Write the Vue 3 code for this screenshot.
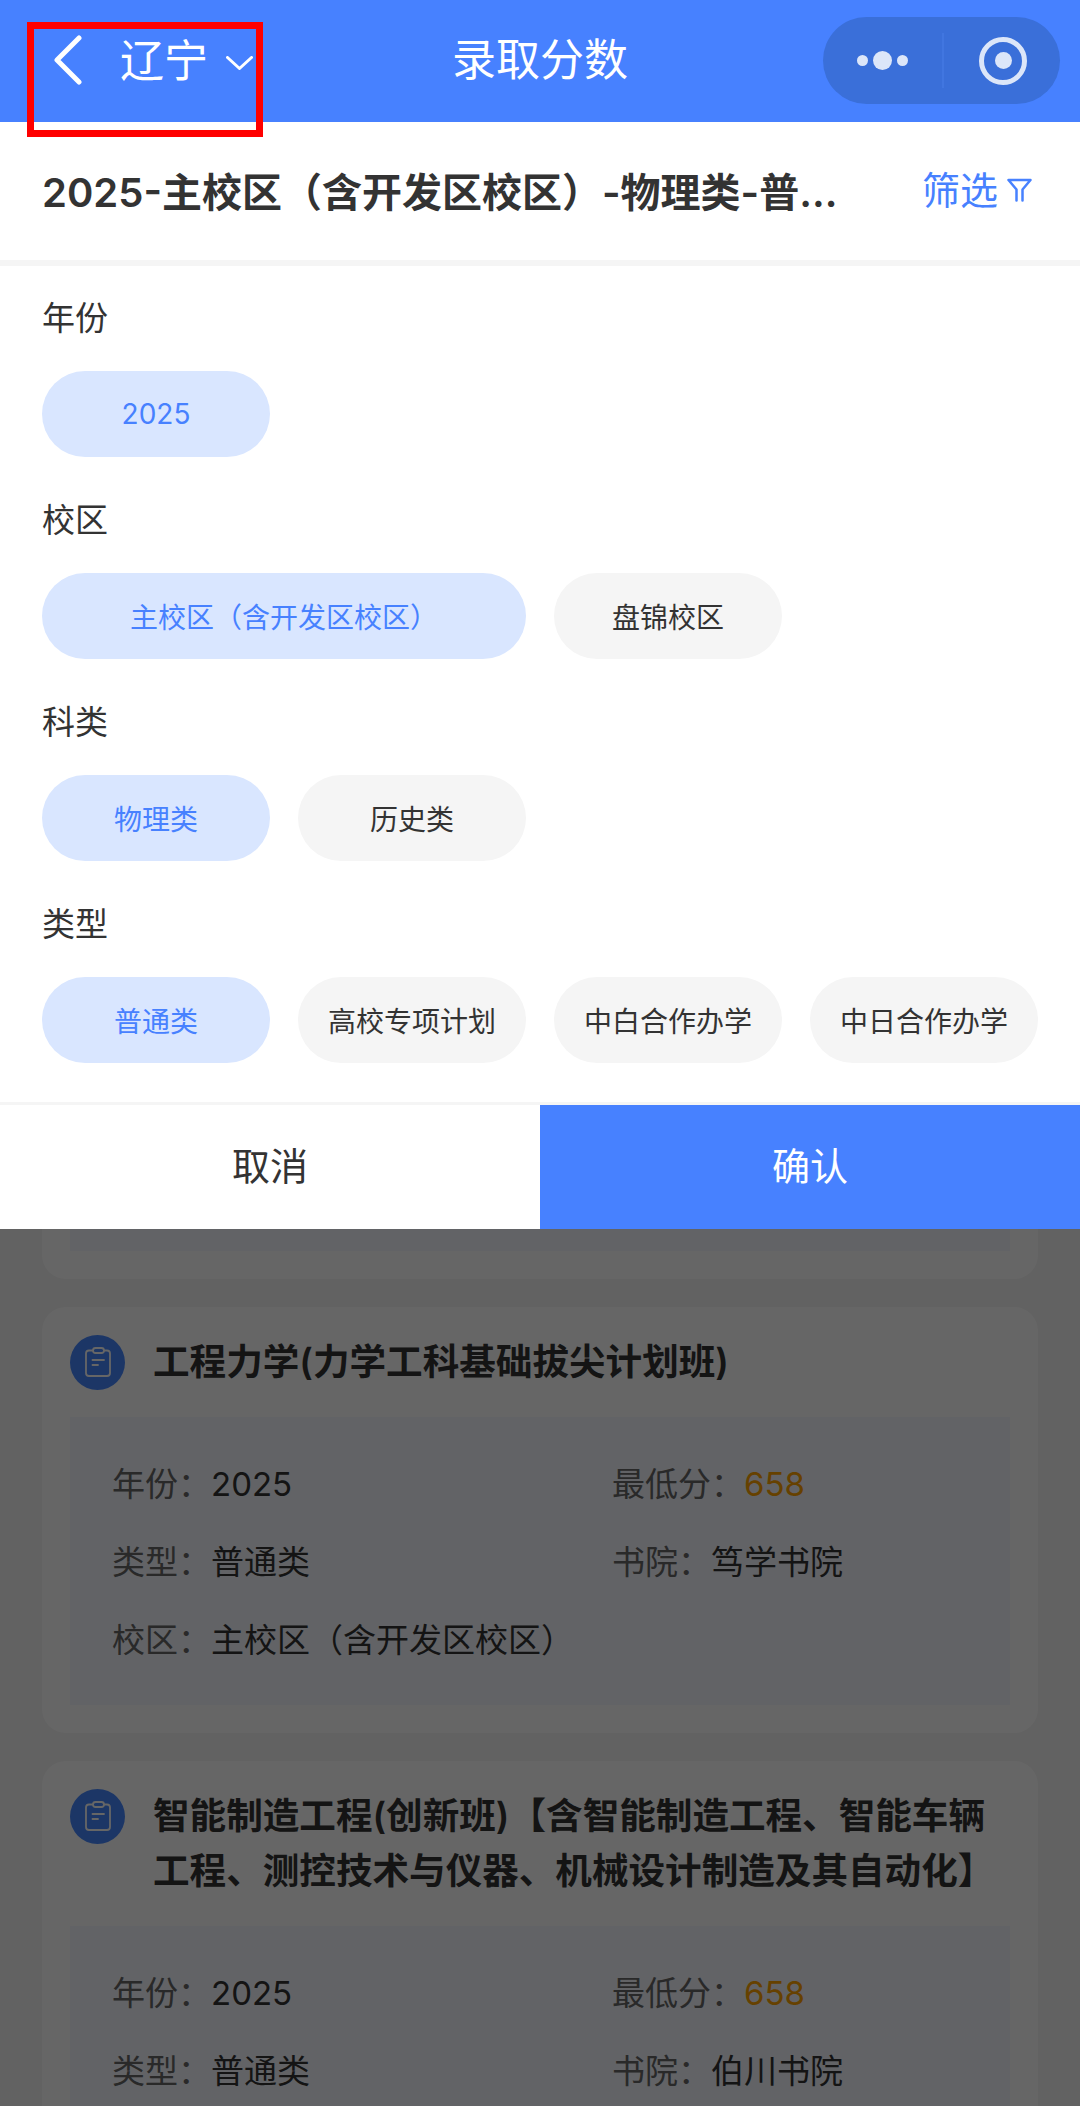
<script setup>
const groups = [
  { label: '年份', chips: [{ text: '2025', active: true }] },
  { label: '校区', chips: [{ text: '主校区（含开发区校区）', active: true, wide: true }, { text: '盘锦校区' }] },
  { label: '科类', chips: [{ text: '物理类', active: true }, { text: '历史类' }] },
  { label: '类型', chips: [{ text: '普通类', active: true }, { text: '高校专项计划' }, { text: '中白合作办学' }, { text: '中日合作办学' }] },
]
const cards = [
  {
    lines: ['工程力学(力学工科基础拔尖计划班)'],
    college: '笃学书院',
    campus: '主校区（含开发区校区）',
  },
  {
    lines: ['智能制造工程(创新班)【含智能制造工程、智能车辆', '工程、测控技术与仪器、机械设计制造及其自动化】'],
    college: '伯川书院',
  },
]
</script>

<template>
  <div class="page">
    <header class="nav">
      <div class="nav-left">
        <svg class="back" width="28" height="50" viewBox="0 0 28 50"><path d="M25 3 3 25l22 22" /></svg>
        <span class="province">辽宁</span>
        <svg class="caret" width="27" height="14" viewBox="0 0 27 14"><path d="M1.500 1.500 13.500 12.500l12-11" /></svg>
      </div>
      <div class="nav-title">录取分数</div>
      <div class="nav-right">
        <div class="capsule">
          <div class="dots"><i class="dot"></i><i class="dot big"></i><i class="dot"></i></div>
          <i class="capsule-line"></i>
          <div class="target"><i></i></div>
        </div>
      </div>
    </header>

    <section class="summary">
      <div class="summary-text">2025-主校区（含开发区校区）-物理类-普通类</div>
      <div class="filter">
        <span>筛选</span>
        <svg width="25" height="24" viewBox="0 0 25 24"><path d="M9.500 22.500V11.500L1.500 2h22l-8 9.500v11" /></svg>
      </div>
    </section>

    <section class="panel">
      <div class="groups">
        <div v-for="g in groups" :key="g.label" class="group">
          <div class="group-label">{{ g.label }}</div>
          <div class="chips">
            <div
              v-for="c in g.chips"
              :key="c.text"
              class="chip"
              :class="{ active: c.active, wide: c.wide }"
            >{{ c.text }}</div>
          </div>
        </div>
      </div>
      <div class="actions">
        <div class="btn cancel">取消</div>
        <div class="btn confirm">确认</div>
      </div>
    </section>

    <section class="list">
      <div class="card tail"><div class="tail-info"></div></div>
      <article v-for="c in cards" :key="c.college" class="card">
        <div class="card-head">
          <svg class="card-icon" width="55" height="55" viewBox="0 0 55 55">
            <circle cx="27.500" cy="27.500" r="27.500" fill="#4788ff" />
            <g fill="none" stroke="#fff" stroke-width="1.800" stroke-linecap="round" stroke-linejoin="round">
              <rect x="16" y="15.500" width="24" height="25.500" rx="3" />
              <rect x="23" y="13" width="11" height="5" rx="2.500" fill="#4788ff" />
              <path d="M22.500 25H34M22.500 30H28" />
            </g>
          </svg>
          <h3 class="card-title"><span v-for="l in c.lines" :key="l">{{ l }}</span></h3>
        </div>
        <div class="info">
          <div class="row"><span class="k">年份：</span><span class="v">2025</span></div>
          <div class="row"><span class="k">最低分：</span><span class="v score">658</span></div>
          <div class="row"><span class="k">类型：</span><span class="v">普通类</span></div>
          <div class="row"><span class="k">书院：</span><span class="v">{{ c.college }}</span></div>
          <div v-if="c.campus" class="row full"><span class="k">校区：</span><span class="v">{{ c.campus }}</span></div>
        </div>
      </article>
      <div class="mask"></div>
    </section>

    <div class="highlight"></div>
  </div>
</template>

<style>
html, body { margin: 0; background: #f5f5f5; }
</style>

<style scoped>
.page {
  position: relative;
  width: 1080px;
  height: 2106px;
  overflow: hidden;
  background: #f5f5f5;
  font-family: Inter, "Noto Sans CJK SC", sans-serif;
  color: #333;
}
.nav {
  height: 122px;
  background: #4781ff;
  color: #fff;
  display: grid;
  grid-template-columns: 1fr auto 1fr;
  font-size: 44px;
}
.nav-left {
  display: flex;
  align-items: center;
  padding: 0 0 0 54px;
  height: 122px;
}
.back { margin-bottom: 2px; }
.back path, .caret path {
  fill: none;
  stroke: #fff;
  stroke-width: 5;
  stroke-linecap: round;
  stroke-linejoin: round;
}
.caret path { stroke-width: 3; }
.province { margin-left: 38px; line-height: 122px; }
.caret { margin-left: 18px; margin-top: 4px; }
.nav-title { line-height: 120px; }
.nav-right { display: flex; justify-content: flex-end; padding: 17px 20px 0 0; }
.capsule {
  width: 237px;
  height: 87px;
  border-radius: 44px;
  background: #3a6fd9;
  display: flex;
  align-items: center;
}
.dots { display: flex; align-items: center; gap: 5px; margin-left: 34px; width: 85px; }
.dot { width: 11px; height: 11px; border-radius: 50%; background: #dce6f9; }
.dot.big { width: 19px; height: 19px; }
.capsule-line { width: 2px; height: 55px; background: #4176e0; }
.target {
  margin-left: 35px;
  width: 48px;
  height: 48px;
  box-sizing: border-box;
  border: 5px solid #dce6f9;
  border-radius: 50%;
  display: flex;
  align-items: center;
  justify-content: center;
}
.target i { width: 17px; height: 17px; border-radius: 50%; background: #dce6f9; }

.summary {
  height: 136px;
  padding: 0 48px 2px 42px;
  background: #fff;
  display: flex;
  align-items: center;
  justify-content: space-between;
}
.summary-text {
  width: 803px;
  font-size: 40px;
  font-weight: 600;
  white-space: nowrap;
  overflow: hidden;
  text-overflow: ellipsis;
  color: #333;
}
.filter {
  display: flex;
  align-items: center;
  gap: 9px;
  color: #4781ff;
  font-size: 38px;
}
.filter span { padding-bottom: 6px; }
.filter svg path { fill: none; stroke: #4781ff; stroke-width: 2.500; stroke-linecap: round; stroke-linejoin: round; }

.panel { margin-top: 6px; background: #fff; }
.groups { padding: 31px 42px 39px; display: flex; flex-direction: column; gap: 42px; }
.group-label { height: 40px; line-height: 43px; font-size: 33px; color: #333; margin-bottom: 34px; }
.chips { display: flex; gap: 28px; }
.chip {
  width: 228px;
  height: 86px;
  border-radius: 43px;
  background: #f5f5f5;
  display: flex;
  align-items: center;
  justify-content: center;
  font-size: 28px;
  color: #333;
}
.chip.wide { width: 484px; }
.chip.active { background: #d9e6ff; color: #4781ff; }
.actions { display: flex; height: 124px; border-top: 3px solid #f5f5f5; }
.btn {
  flex: 1;
  display: flex;
  align-items: center;
  justify-content: center;
  padding-bottom: 7px;
  font-size: 38px;
}
.cancel { background: #fff; color: #333; }
.confirm { background: #4781ff; color: #fff; }

.list {
  position: relative;
  height: 877px;
  padding: 0 42px;
  box-sizing: border-box;
  display: flex;
  flex-direction: column;
  gap: 28px;
}
.mask { position: absolute; inset: 0; background: rgba(0, 0, 0, .6); }
.card { background: #fff; border-radius: 24px; padding: 28px; flex: none; }
.tail { padding: 0 28px 28px; border-radius: 0 0 24px 24px; }
.tail-info { height: 22px; background: #f5f8ff; }
.card-head { display: flex; gap: 28px; align-items: flex-start; }
.card-icon { flex: none; }
.card-title {
  margin: 0;
  font-size: 36.600px;
  font-weight: 600;
  line-height: 55px;
  color: #333;
  white-space: nowrap;
}
.card-title span { display: block; }
.info {
  margin-top: 27px;
  padding: 28px 42px 26px;
  background: #f5f8ff;
  display: grid;
  grid-template-columns: 500px 1fr;
  color: #333;
}
.row { height: 78px; line-height: 78px; font-size: 33px; white-space: nowrap; }
.row.full { grid-column: 1 / -1; }
.k { color: #666; }
.score { color: #ffa200; }

.highlight {
  position: absolute;
  left: 27px;
  top: 22px;
  width: 236px;
  height: 115px;
  box-sizing: border-box;
  border: 7px solid #f00;
  pointer-events: none;
}
</style>
